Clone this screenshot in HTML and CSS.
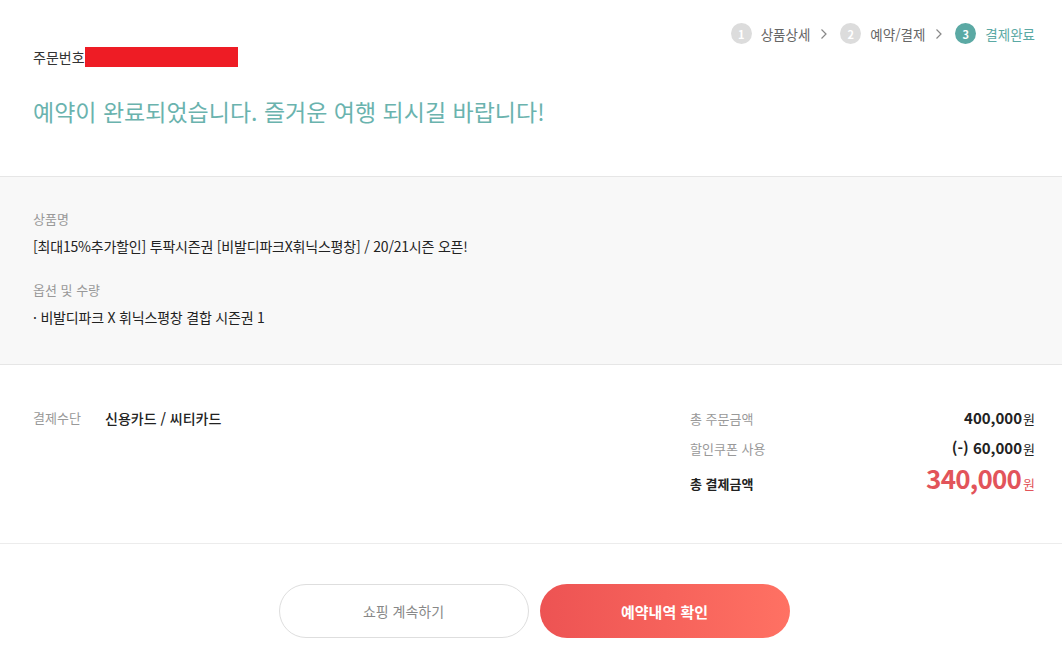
FILE: index.html
```html
<!DOCTYPE html>
<html lang="ko">
<head>
<meta charset="utf-8">
<link rel="stylesheet" href="styles.css">
</head>
<body>
<div class="page">
  <header class="top">
    <ol class="steps">
      <li class="step"><span class="num">1</span><span class="label">상품상세</span><svg class="arrow" width="8" height="12" viewBox="0 0 8 12"><path d="M1.5 1.5 L6 6 L1.5 10.5" fill="none" stroke="#888" stroke-width="1.2"/></svg></li>
      <li class="step"><span class="num">2</span><span class="label">예약/결제</span><svg class="arrow" width="8" height="12" viewBox="0 0 8 12"><path d="M1.5 1.5 L6 6 L1.5 10.5" fill="none" stroke="#888" stroke-width="1.2"/></svg></li>
      <li class="step active"><span class="num">3</span><span class="label">결제완료</span></li>
    </ol>
    <div class="order-no">주문번호<span class="redact"></span></div>
    <h1 class="title">예약이 완료되었습니다. 즐거운 여행 되시길 바랍니다!</h1>
  </header>

  <section class="product">
    <div class="field">
      <div class="field-label">상품명</div>
      <div class="field-value">[최대15%추가할인] 투팍시즌권 [비발디파크X휘닉스평창] / 20/21시즌 오픈!</div>
    </div>
    <div class="field">
      <div class="field-label">옵션 및 수량</div>
      <div class="field-value">· 비발디파크 X 휘닉스평창 결합 시즌권 1</div>
    </div>
  </section>

  <section class="payment">
    <div class="method">
      <span class="method-label">결제수단</span>
      <span class="method-value">신용카드 / 씨티카드</span>
    </div>
    <div class="summary">
      <div class="row"><span class="row-label">총 주문금액</span><span class="row-value"><b>400,000</b>원</span></div>
      <div class="row"><span class="row-label">할인쿠폰 사용</span><span class="row-value"><b>(-) 60,000</b>원</span></div>
      <div class="row total"><span class="row-label">총 결제금액</span><span class="row-value"><b>340,000</b>원</span></div>
    </div>
  </section>

  <div class="actions">
    <button class="btn btn-outline">쇼핑 계속하기</button>
    <button class="btn btn-primary">예약내역 확인</button>
  </div>
</div>
</body>
</html>
```

FILE: styles.css
```css
* { box-sizing: border-box; }
html, body { margin: 0; padding: 0; background: #fff; }
body {
  font-family: "Noto Sans CJK KR", "Noto Sans", sans-serif;
  color: #222;
  width: 1062px;
}
.page { width: 1062px; }

.top {
  position: relative;
  padding: 47px 27px 0 33px;
  height: 177px;
  border-bottom: 1px solid #e6e6e6;
}
.steps {
  position: absolute;
  top: 23px;
  right: 27px;
  margin: 0;
  padding: 0;
  list-style: none;
  display: flex;
  align-items: center;
}
.step {
  display: flex;
  align-items: center;
  font-size: 13.5px;
  color: #666;
  line-height: 20px;
}
.num {
  width: 21px;
  height: 21px;
  border-radius: 50%;
  background: #dcdcdc;
  color: #fff;
  font-size: 11px;
  font-weight: 700;
  display: flex;
  align-items: center;
  justify-content: center;
  margin-right: 9px;
}
.arrow {
  margin: 0 12px 0 10px;
}
.step.active .num { background: #5ba9a4; }
.step.active .label { color: #5ba9a4; }

.order-no {
  display: flex;
  align-items: center;
  font-size: 14px;
  color: #333;
  height: 20px;
}
.redact {
  display: inline-block;
  width: 153px;
  height: 20px;
  background: #ee1c25;
}
.title {
  margin: 28px 0 0;
  font-size: 23px;
  font-weight: 400;
  color: #6ab3ae;
  letter-spacing: 0;
  line-height: 32px;
}

.product {
  background: #f8f8f8;
  padding: 32px 33px 23px;
  height: 188px;
  border-bottom: 1px solid #e6e6e6;
}
.field { margin-bottom: 24px; }
.field-label {
  font-size: 13px;
  color: #999;
  line-height: 20px;
  margin-bottom: 7px;
}
.field-value {
  font-size: 14px;
  color: #222;
  line-height: 20px;
  letter-spacing: -0.2px;
}

.payment {
  display: flex;
  justify-content: space-between;
  padding: 43px 27px 0 33px;
  height: 179px;
  border-bottom: 1px solid #ececec;
}
.method { display: flex; font-size: 13px; line-height: 20px; }
.method-label { color: #999; width: 72px; }
.method-value { color: #222; font-weight: 500; font-size: 14px; }

.summary { width: 345px; }
.row {
  display: flex;
  justify-content: space-between;
  align-items: baseline;
  font-size: 13px;
  line-height: 20px;
  margin-bottom: 9px;
}
.row-label { color: #999; }
.row-value { color: #222; font-size: 13px; }
.row-value b { font-size: 15px; font-weight: 700; margin-right: 1px; }
.row.total { margin-top: 9px; }
.row.total .row-label { color: #222; font-weight: 700; }
.row.total .row-value { color: #e2545a; font-size: 13px; }
.row.total .row-value b { font-size: 26px; letter-spacing: -0.8px; margin-right: 2px; }

.actions {
  display: flex;
  justify-content: center;
  gap: 11px;
  padding: 40px 27px 0 33px;
}
.btn {
  width: 250px;
  height: 54px;
  border-radius: 27px;
  font-family: "Noto Sans CJK KR", "Noto Sans", sans-serif;
  font-size: 14px;
  cursor: pointer;
}
.btn-outline {
  background: #fff;
  border: 1px solid #dedede;
  color: #888;
}
.btn-primary {
  border: none;
  background: linear-gradient(90deg, #ed5353 0%, #ff7163 100%);
  color: #fff;
  font-weight: 700;
  font-size: 15px;
}
```
